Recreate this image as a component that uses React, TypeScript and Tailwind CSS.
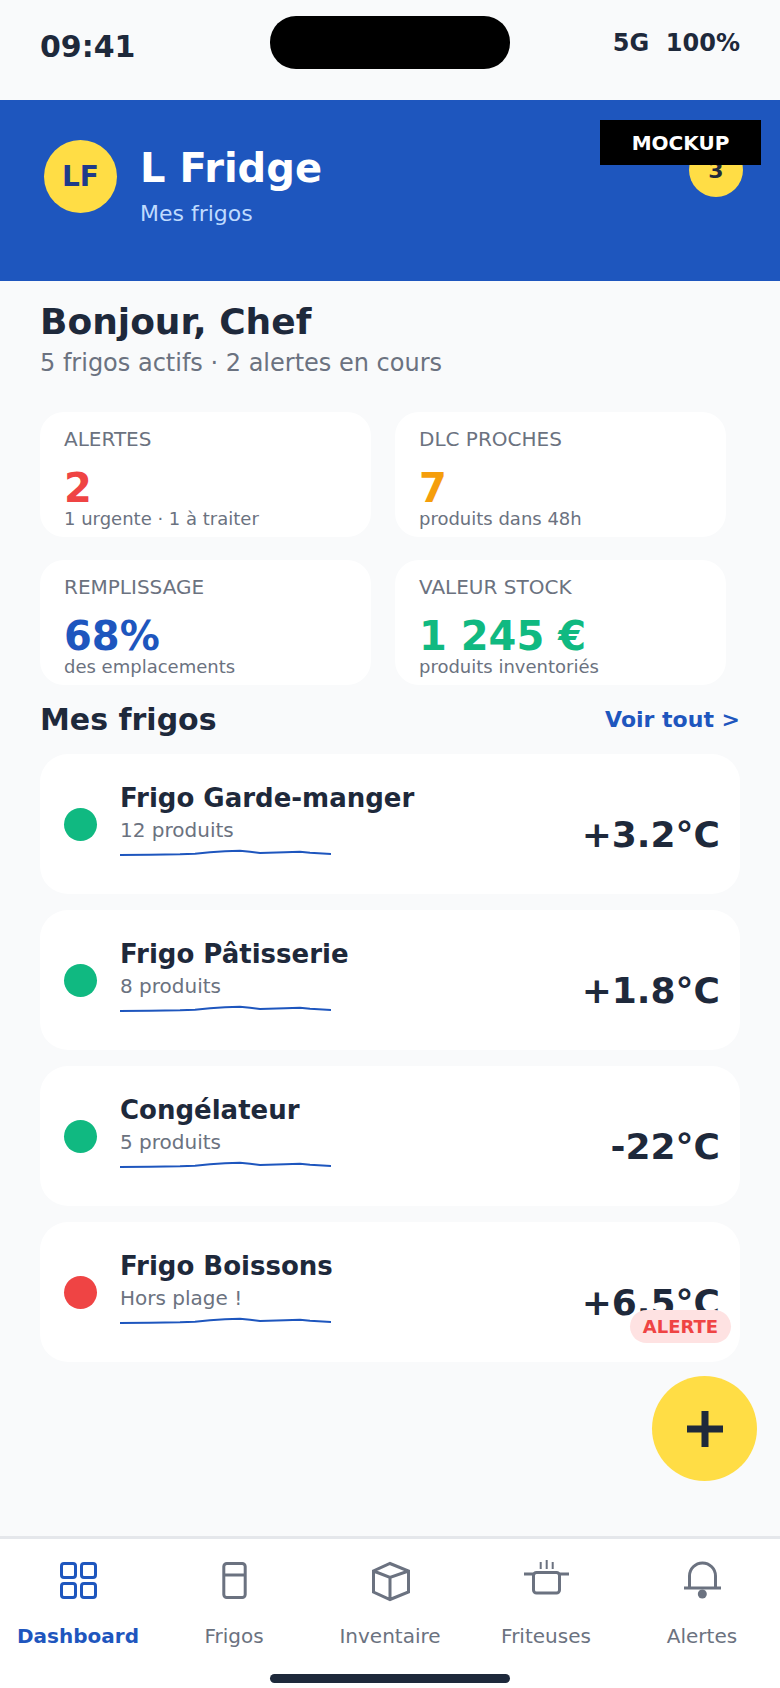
import React from 'react';

const stats = [
  { label: 'ALERTES', value: '2', sub: '1 urgente · 1 à traiter', color: 'text-[#ef4444]' },
  { label: 'DLC PROCHES', value: '7', sub: 'produits dans 48h', color: 'text-[#f59e0b]' },
  { label: 'REMPLISSAGE', value: '68%', sub: 'des emplacements', color: 'text-[#1e56be]' },
  { label: 'VALEUR STOCK', value: '1 245 €', sub: 'produits inventoriés', color: 'text-[#10b981]' },
];

const fridges = [
  { name: 'Frigo Garde-manger', sub: '12 produits', temp: '+3.2°C', alert: false },
  { name: 'Frigo Pâtisserie', sub: '8 produits', temp: '+1.8°C', alert: false },
  { name: 'Congélateur', sub: '5 produits', temp: '-22°C', alert: false },
  { name: 'Frigo Boissons', sub: 'Hors plage !', temp: '+6.5°C', alert: true },
];

const Sparkline = () => (
  <svg className="block w-[211px] h-[10px] mt-[5px]" viewBox="0 0 211 10" fill="none">
    <path
      d="M0 7 L30 6.7 L60 6.3 L75 5.7 L90 4.3 L105 3.3 L120 2.7 L130 3.7 L140 5 L165 4.3 L180 3.7 L190 4.7 L211 6"
      stroke="#1e56be"
      strokeWidth="2"
    />
  </svg>
);

const navItems = [
  {
    label: 'Dashboard',
    active: true,
    icon: (
      <>
        <rect x="5.5" y="3.5" width="14" height="14" rx="2.5" />
        <rect x="25.5" y="3.5" width="14" height="14" rx="2.5" />
        <rect x="5.5" y="23.5" width="14" height="14" rx="2.5" />
        <rect x="25.5" y="23.5" width="14" height="14" rx="2.5" />
      </>
    ),
  },
  {
    label: 'Frigos',
    active: false,
    icon: (
      <>
        <rect x="11.8" y="3.5" width="21.4" height="34" rx="3" />
        <path d="M11.8 15 H33.2" />
      </>
    ),
  },
  {
    label: 'Inventaire',
    active: false,
    icon: <path d="M22 3.5 L40.5 11 V32 L22 39.5 L5.5 32 V11 Z M5.5 11 L22 17.5 L40.5 11 M22 17.5 V39.5" />,
  },
  {
    label: 'Friteuses',
    active: false,
    icon: (
      <>
        <path d="M0 14 H9.5 M35.5 14 H45" />
        <rect x="9.5" y="12.5" width="26" height="20.5" rx="3" />
        <path strokeWidth="2" d="M16.7 2 V9 M22.7 0 V9 M28.7 2 V9" />
      </>
    ),
  },
  {
    label: 'Alertes',
    active: false,
    icon: (
      <>
        <path d="M9.5 28 V16 A13 13 0 0 1 35.5 16 V28 M4 28 H41" />
        <circle cx="22.3" cy="34" r="4.5" fill="currentColor" stroke="none" />
      </>
    ),
  },
];

export default function App() {
  return (
    <div className="relative w-[780px] h-[1688px] overflow-hidden bg-[#f9fafb] text-[#1e293b] font-['DejaVu_Sans',sans-serif]">
      {/* Status bar */}
      <div className="h-[100px] flex justify-between items-start px-10">
        <span className="mt-[28px] text-[30px] leading-[38px] font-bold">09:41</span>
        <span className="mt-[27px] text-[24px] leading-[32px] font-bold whitespace-pre">5G  100%</span>
      </div>
      <div className="absolute top-4 left-[270px] w-[240px] h-[53px] rounded-[26px] bg-black" />

      {/* Header */}
      <div className="relative h-[181px] bg-[#1e56be] pl-11 pr-[37px] pt-10 flex items-start justify-between">
        <div className="flex items-start gap-[23px]">
          <div className="w-[73px] h-[73px] rounded-full bg-[#ffdd45] flex items-center justify-center text-[28px] font-bold text-[#1e3a8a]">
            LF
          </div>
          <div className="pt-1">
            <div className="text-[40px] leading-[48px] font-bold text-white">L Fridge</div>
            <div className="mt-2 text-[22px] leading-[28px] text-[#bfdbfe]">Mes frigos</div>
          </div>
        </div>
        <div className="mt-[3px] w-[54px] h-[54px] rounded-full bg-[#ffdd45] flex items-center justify-center text-[22px] font-bold">
          3
        </div>
      </div>
      <div className="absolute top-[120px] left-[600px] w-[161px] h-[45px] bg-black flex items-center justify-center text-[20px] font-bold text-white">
        MOCKUP
      </div>

      {/* Content */}
      <div className="pl-10 pr-10 pt-[18px]">
        <div className="text-[36px] leading-[46px] font-bold">Bonjour, Chef</div>
        <div className="mt-[2px] text-[24px] leading-[32px] text-[#6b7280]">5 frigos actifs · 2 alertes en cours</div>

        <div className="mt-[33px] grid grid-cols-[331px_331px] gap-x-6 gap-y-[23px]">
          {stats.map((s) => (
            <div key={s.label} className="h-[125px] rounded-3xl bg-white px-6 pt-[14px] overflow-hidden">
              <div className="text-[20px] leading-[26px] text-[#6b7280]">{s.label}</div>
              <div className={`mt-[17px] text-[40px] leading-[39px] font-bold ${s.color}`}>{s.value}</div>
              <div className="text-[18px] leading-[22px] text-[#6b7280]">{s.sub}</div>
            </div>
          ))}
        </div>

        <div className="mt-4 flex items-center justify-between">
          <span className="text-[30px] leading-[38px] font-bold">Mes frigos</span>
          <span className="text-[22px] leading-[28px] font-bold text-[#1e56be]">Voir tout &gt;</span>
        </div>

        <div className="mt-[15px] flex flex-col gap-4">
          {fridges.map((f) => (
            <div key={f.name} className="relative h-[140px] rounded-[28px] bg-white flex items-start pl-6 pr-5">
              <div className={`mt-[54px] w-[33px] h-[33px] rounded-full ${f.alert ? 'bg-[#ef4444]' : 'bg-[#10b981]'}`} />
              <div className="ml-[23px] mt-[27px] flex-1">
                <div className="text-[26px] leading-[34px] font-bold">{f.name}</div>
                <div className="mt-[2px] text-[20px] leading-[26px] text-[#6b7280]">{f.sub}</div>
                <Sparkline />
              </div>
              <div className="mt-[58px] text-[36px] leading-[46px] font-bold">{f.temp}</div>
              {f.alert && (
                <div className="absolute top-[88px] right-[9px] w-[101px] h-[33px] rounded-full bg-[#fee2e2] flex items-center justify-center text-[18px] font-bold text-[#ef4444]">
                  ALERTE
                </div>
              )}
            </div>
          ))}
        </div>
      </div>

      {/* FAB */}
      <div className="absolute top-[1376px] left-[652px] w-[105px] h-[105px] rounded-full bg-[#ffdd45] flex items-center justify-center">
        <svg width="36" height="36" viewBox="0 0 36 36" fill="#1e293b">
          <rect x="0" y="14.5" width="36" height="7" />
          <rect x="14.5" y="0" width="7" height="36" />
        </svg>
      </div>

      {/* Bottom nav */}
      <div className="absolute bottom-0 left-0 w-full h-[152px] bg-white border-t-[3px] border-[#e5e7eb]">
        <div className="grid grid-cols-5 pt-[21px]">
          {navItems.map((item) => (
            <div
              key={item.label}
              className={`flex flex-col items-center ${item.active ? 'text-[#1e56be] font-bold' : 'text-[#6b7280]'}`}
            >
              <svg
                width="44"
                height="40"
                viewBox="0 0 44 40"
                fill="none"
                stroke="currentColor"
                strokeWidth="3"
                className="overflow-visible"
              >
                {item.icon}
              </svg>
              <span className="mt-[23px] text-[20px] leading-[26px]">{item.label}</span>
            </div>
          ))}
        </div>
        <div className="absolute bottom-[5px] left-[270px] w-[240px] h-[9px] rounded-full bg-[#1e293b]" />
      </div>
    </div>
  );
}
